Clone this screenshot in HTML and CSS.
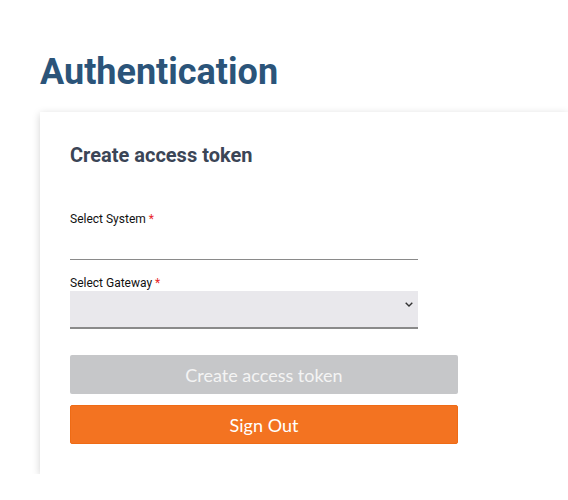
FILE: index.html
```html
<!DOCTYPE html>
<html>
<head>
<meta charset="utf-8">
<link rel="stylesheet" href="styles.css">
</head>
<body>
<main class="page">
  <h1 class="page-title">Authentication</h1>
  <section class="card">
    <h2 class="card-title">Create access token</h2>
    <div class="field">
      <label class="field-label">Select System <span class="req">*</span></label>
      <div class="input-line"></div>
    </div>
    <div class="field field-gateway">
      <label class="field-label">Select Gateway <span class="req">*</span></label>
      <div class="select-box">
        <svg class="chevron" width="8" height="5" viewBox="0 0 8 5"><path d="M0.7 0.7 L4 4 L7.3 0.7" fill="none" stroke="#333" stroke-width="1.4"/></svg>
      </div>
    </div>
    <div class="actions">
      <button class="btn btn-disabled">Create access token</button>
      <button class="btn btn-primary">Sign Out</button>
    </div>
  </section>
</main>
</body>
</html>
```
FILE: styles.css
```css
html, body { margin: 0; padding: 0; background: #fff; }
body { font-family: Roboto, "Liberation Sans", sans-serif; }
.page { padding: 50px 0 0 40px; }
.page-title {
  margin: 0 0 18px 0;
  font-size: 36px;
  line-height: 44px;
  font-weight: 700;
  color: #2b5479;
}
.card {
  padding: 31px 30px 30px 30px;
  background: #fff;
  box-shadow: 0 2px 8px rgba(0,0,0,0.18);
}
.card-title {
  margin: 0;
  font-size: 20px;
  line-height: 24px;
  font-weight: 700;
  color: #3b4556;
}
.field { width: 348px; }
.field:first-of-type { margin-top: 45px; }
.field-label {
  display: block;
  font-size: 12px;
  line-height: 14px;
  color: #111;
}
.req { color: #e8262a; }
.input-line {
  height: 33px;
  border-bottom: 1px solid #8a8a8a;
}
.field-gateway { margin-top: 16px; }
.select-box {
  height: 36px;
  margin-top: 1px;
  background: #e9e8ec;
  border-bottom: 2px solid #8a8a8a;
  display: flex;
  justify-content: flex-end;
  align-items: flex-start;
}
.chevron { margin: 11px 5px 0 0; }
.actions {
  margin-top: 26px;
  width: 388px;
  display: flex;
  flex-direction: column;
  gap: 11px;
}
.btn {
  height: 39px;
  border: none;
  border-radius: 2px;
  font-family: Lato, Tahoma, sans-serif;
  font-size: 18px;
  color: #fff;
  padding: 0;
}
.btn-disabled { background: #c6c7c9; color: #f4f4f4; }
.btn-primary { background: #f37321; border: 1px solid #ef6b15; }
```
